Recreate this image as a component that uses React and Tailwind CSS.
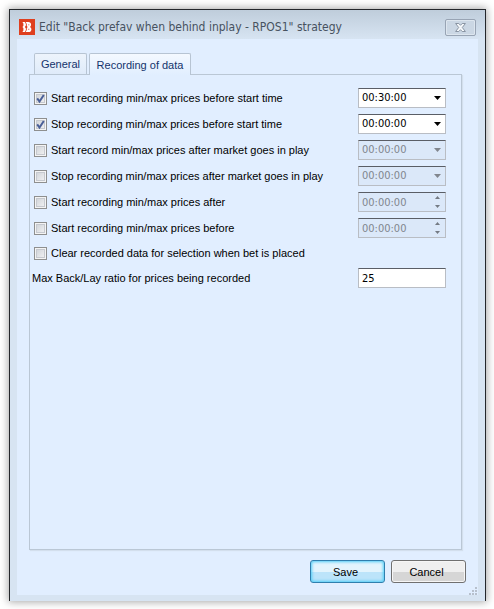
import { useState } from 'react'

const timeOptions = ['00:00:00', '00:15:00', '00:30:00', '01:00:00']

const timeRows = [
  { id: 'start-before', label: 'Start recording min/max prices before start time', value: '00:30:00', checked: true, kind: 'dropdown' },
  { id: 'stop-before', label: 'Stop recording min/max prices before start time', value: '00:00:00', checked: true, kind: 'dropdown' },
  { id: 'start-inplay', label: 'Start record min/max prices after market goes in play', value: '00:00:00', checked: false, kind: 'dropdown' },
  { id: 'stop-inplay', label: 'Stop recording min/max prices after market goes in play', value: '00:00:00', checked: false, kind: 'dropdown' },
  { id: 'price-after', label: 'Start recording min/max prices after', value: '00:00:00', checked: false, kind: 'spinner' },
  { id: 'price-before', label: 'Start recording min/max prices before', value: '00:00:00', checked: false, kind: 'spinner' },
]

const fieldClass =
  "h-5 w-[88px] appearance-none rounded-none border border-[#b9bdc4] border-t-[#5a5e66] bg-white px-[3px] font-['DejaVu_Sans_Condensed','DejaVu_Sans',sans-serif] text-[11px] leading-4 text-black outline-none disabled:bg-[#dbe8f9] disabled:text-[#81868e] disabled:opacity-100"

function LogoIcon() {
  return (
    <svg className="h-4 w-4 shrink-0" viewBox="0 0 16 16" aria-hidden="true">
      <rect width="16" height="16" fill="#df3f1e" />
      <path d="M3.4 3h2.4l1.1 2v1.6L5.9 8l1 1.4V11l-1.1 2H3.4l1-1.6V9.3L3.5 8l.9-1.3V4.6z" fill="#fff" />
      <path
        d="M6.6 3h2.6c1.8 0 2.9.9 2.9 2.5 0 1.1-.4 1.9-1.1 2.4.9.5 1.4 1.4 1.4 2.5 0 1.7-1.2 2.6-3 2.6H6.6l1.2-2V9.3L8.6 8l-.8-1.3V5z"
        fill="#fff"
      />
      <path d="M9.8 5.2v1.2M9.8 9.7v1.3" stroke="#df3f1e" strokeWidth="0.7" />
    </svg>
  )
}

function CloseIcon() {
  return (
    <svg className="h-[9px] w-[11px]" viewBox="0 0 11 9" aria-hidden="true">
      <path
        d="M.6.5h3.2l1.7 1.8L7.2.5h3.2L7.3 4.5l3.1 4H7.2L5.5 6.7 3.8 8.5H.6l3.1-4z"
        fill="#f5f8fb"
        stroke="#8994a2"
        strokeWidth="1"
      />
    </svg>
  )
}

function CheckBox({ id, checked, onChange }) {
  return (
    <span className="relative h-[13px] w-[13px] shrink-0">
      <input
        id={id}
        type="checkbox"
        checked={checked}
        onChange={onChange}
        className="block h-[13px] w-[13px] appearance-none border border-[#8e8f8f] bg-linear-to-br from-[#cbcfd5] to-[#f6f6f6] shadow-[inset_0_0_0_1px_#f4f4f4,inset_0_0_0_2px_#c6c9cf]"
      />
      {checked && (
        <svg className="pointer-events-none absolute inset-0" width="13" height="13" viewBox="0 0 13 13" aria-hidden="true">
          <path d="M3.2 6.3l2.3 3.2L9.8 3" fill="none" stroke="#4a5f97" strokeWidth="2" />
        </svg>
      )}
    </span>
  )
}

function TimeField({ row, checked }) {
  const [value, setValue] = useState(row.value)

  if (row.kind === 'dropdown') {
    return (
      <div className="relative shrink-0">
        <select
          aria-label={row.label}
          value={value}
          disabled={!checked}
          onChange={(e) => setValue(e.target.value)}
          className={`block ${fieldClass}`}
        >
          {timeOptions.map((time) => (
            <option key={time}>{time}</option>
          ))}
        </select>
        <svg
          className={`pointer-events-none absolute top-2 right-[5px] ${checked ? 'text-black' : 'text-[#81868e]'}`}
          width="7"
          height="4"
          viewBox="0 0 7 4"
          aria-hidden="true"
        >
          <path d="M0 0h7L3.5 4z" fill="currentColor" />
        </svg>
      </div>
    )
  }

  return (
    <div className="relative shrink-0">
      <input
        type="text"
        aria-label={row.label}
        value={value}
        disabled={!checked}
        onChange={(e) => setValue(e.target.value)}
        className={`block ${fieldClass}`}
      />
      <div className="absolute top-1 right-1 flex flex-col gap-[6px] text-[#747a83]">
        <button type="button" aria-label="Increase" disabled={!checked} className="block h-[3px] w-[9px]">
          <svg className="mx-auto block" width="5" height="3" viewBox="0 0 5 3" aria-hidden="true">
            <path d="M0 3h5L2.5 0z" fill="currentColor" />
          </svg>
        </button>
        <button type="button" aria-label="Decrease" disabled={!checked} className="block h-[3px] w-[9px]">
          <svg className="mx-auto block" width="5" height="3" viewBox="0 0 5 3" aria-hidden="true">
            <path d="M0 0h5L2.5 3z" fill="currentColor" />
          </svg>
        </button>
      </div>
    </div>
  )
}

function TimeRow({ row }) {
  const [checked, setChecked] = useState(row.checked)

  return (
    <div className="flex h-5 items-center justify-between">
      <div className="flex items-center gap-1">
        <CheckBox id={row.id} checked={checked} onChange={() => setChecked(!checked)} />
        <label htmlFor={row.id} className="whitespace-nowrap">
          {row.label}
        </label>
      </div>
      <TimeField row={row} checked={checked} />
    </div>
  )
}

function Grip() {
  const dots = [[6, 0], [3, 3], [6, 3], [0, 6], [3, 6], [6, 6]]
  return (
    <svg className="absolute right-0 bottom-0" width="9" height="8" viewBox="0 0 9 8" aria-hidden="true">
      {dots.map(([x, y]) => (
        <rect key={`${x}-${y}`} x={x} y={y} width="2" height="2" fill="#b7c0cc" />
      ))}
    </svg>
  )
}

function App() {
  const [clearData, setClearData] = useState(false)
  const [ratio, setRatio] = useState('25')

  return (
    <main className="flex min-h-screen bg-white pt-[9px] pr-2 pb-2 pl-[9px] font-['Liberation_Sans',Arial,sans-serif] text-[11px] leading-4 text-black">
      <div className="flex flex-1 flex-col border-x border-t border-[#24272b] bg-[#d7e4f2] px-[7px] pb-[6px] shadow-[0_0_8px_1px_rgba(0,0,0,0.35)]">
        <header className="-mx-[7px] flex h-[29px] items-center justify-between bg-linear-to-b from-[#bfcddb] to-[#d7e4f2] pt-[5px] pr-[9px] pl-[9px]">
          <div className="flex items-center gap-1">
            <LogoIcon />
            <h1 className="font-['DejaVu_Sans_Condensed','DejaVu_Sans',sans-serif] text-[12px] leading-5 whitespace-nowrap text-[#47525f]">
              Edit "Back prefav when behind inplay - RPOS1" strategy
            </h1>
          </div>
          <button
            type="button"
            aria-label="Close"
            className="flex h-[17px] w-[31px] items-center justify-center rounded-xs border border-[#98a4b4] bg-[#cbd7e4] shadow-[inset_0_0_0_1px_#dde6ef]"
          >
            <CloseIcon />
          </button>
        </header>

        <div className="relative flex flex-1 flex-col bg-[#e1eeff] px-3 pt-[14px] pb-3">
          <nav role="tablist" className="z-10 -mb-px flex gap-[2px] pl-[5px] text-[#14336b]">
            <button
              type="button"
              role="tab"
              aria-selected="false"
              className="mb-px h-[21px] w-[53px] rounded-t-xs border border-b-0 border-[#b7c4d3] bg-linear-to-b from-[#edf4fc] to-[#dfebfa]"
            >
              General
            </button>
            <button
              type="button"
              role="tab"
              aria-selected="true"
              className="h-[22px] w-[102px] rounded-t-xs border border-b-0 border-[#b7c4d3] bg-linear-to-b from-[#f4f9ff] to-[#e1eeff] whitespace-nowrap"
            >
              Recording of data
            </button>
          </nav>

          <section className="mr-1 flex-1 border border-[#bac7d5] pt-[13px] pr-[15px] pl-1 shadow-[1px_1px_1px_#d3dfed]">
            <div className="flex flex-col gap-[6px]">
              {timeRows.map((row) => (
                <TimeRow key={row.id} row={row} />
              ))}
            </div>
            <div className="flex h-[30px] items-center gap-1">
              <CheckBox id="clear-data" checked={clearData} onChange={() => setClearData(!clearData)} />
              <label htmlFor="clear-data" className="whitespace-nowrap">
                Clear recorded data for selection when bet is placed
              </label>
            </div>
            <div className="-ml-[2px] flex h-5 items-center justify-between">
              <label htmlFor="ratio" className="whitespace-nowrap">
                Max Back/Lay ratio for prices being recorded
              </label>
              <input
                id="ratio"
                type="text"
                value={ratio}
                onChange={(e) => setRatio(e.target.value)}
                className={fieldClass}
              />
            </div>
          </section>

          <footer className="flex justify-end gap-[6px] pt-[10px]">
            <button
              type="button"
              className="h-[23px] w-[75px] rounded-[3px] border border-[#2f7fae] bg-linear-to-b from-[#e3f4fd] from-50% to-[#bce4fa] to-50% pr-1 shadow-[inset_0_0_3px_1px_#4fcdf7]"
            >
              Save
            </button>
            <button
              type="button"
              className="h-[23px] w-[75px] rounded-[3px] border border-[#707070] bg-linear-to-b from-[#efefef] from-50% to-[#d6d6d6] to-50% pr-1 shadow-[inset_0_0_0_1px_#f6f6f6]"
            >
              Cancel
            </button>
          </footer>
          <Grip />
        </div>
      </div>
    </main>
  )
}

export default App
